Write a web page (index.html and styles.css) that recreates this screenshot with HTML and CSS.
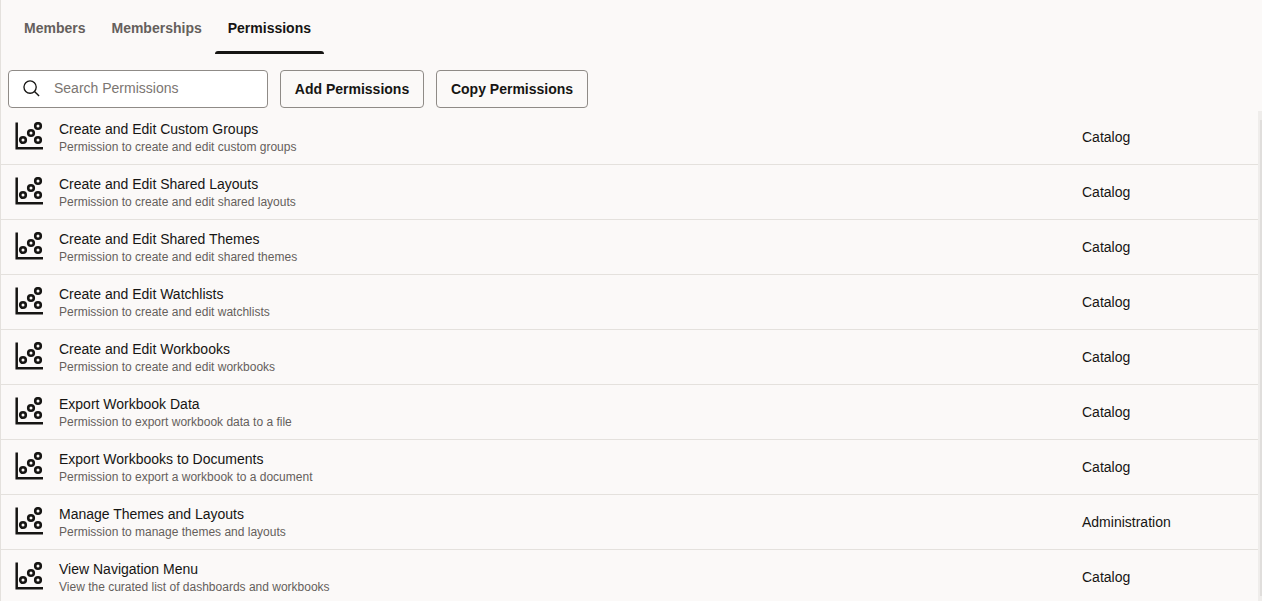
FILE: index.html
```html
<!DOCTYPE html>
<html lang="en">
<head>
<meta charset="utf-8">
<title>Permissions</title>
<link rel="stylesheet" href="styles.css">
</head>
<body>
<svg class="defs" width="0" height="0" aria-hidden="true">
  <symbol id="chart" viewBox="0 0 28 28">
    <path d="M1.7 0.5V26.3H28" fill="none" stroke="currentColor" stroke-width="2.5"/>
    <circle cx="8" cy="18" r="2.8" fill="none" stroke="currentColor" stroke-width="2.6"/>
    <circle cx="16" cy="11" r="2.8" fill="none" stroke="currentColor" stroke-width="2.6"/>
    <circle cx="23" cy="4" r="2.8" fill="none" stroke="currentColor" stroke-width="2.6"/>
    <circle cx="23" cy="18" r="2.8" fill="none" stroke="currentColor" stroke-width="2.6"/>
  </symbol>
</svg>
<div class="page">
  <nav class="tabs">
    <a class="tab">Members</a>
    <a class="tab">Memberships</a>
    <a class="tab active">Permissions</a>
  </nav>
  <div class="toolbar">
    <label class="search">
      <svg class="search-icon" viewBox="0 0 18 18" aria-hidden="true"><circle cx="7.5" cy="7.5" r="6.5" fill="none" stroke="currentColor" stroke-width="1.4"/><path d="M12.2 12.2L17 17" fill="none" stroke="currentColor" stroke-width="1.5"/></svg>
      <span class="placeholder">Search Permissions</span>
    </label>
    <button class="btn btn-add">Add Permissions</button>
    <button class="btn btn-copy">Copy Permissions</button>
  </div>
  <div class="list-wrap">
    <ul class="list">
      <li class="row"><svg class="row-icon"><use href="#chart"/></svg><div class="row-text"><div class="row-title">Create and Edit Custom Groups</div><div class="row-sub">Permission to create and edit custom groups</div></div><div class="row-cat">Catalog</div></li>
      <li class="row"><svg class="row-icon"><use href="#chart"/></svg><div class="row-text"><div class="row-title">Create and Edit Shared Layouts</div><div class="row-sub">Permission to create and edit shared layouts</div></div><div class="row-cat">Catalog</div></li>
      <li class="row"><svg class="row-icon"><use href="#chart"/></svg><div class="row-text"><div class="row-title">Create and Edit Shared Themes</div><div class="row-sub">Permission to create and edit shared themes</div></div><div class="row-cat">Catalog</div></li>
      <li class="row"><svg class="row-icon"><use href="#chart"/></svg><div class="row-text"><div class="row-title">Create and Edit Watchlists</div><div class="row-sub">Permission to create and edit watchlists</div></div><div class="row-cat">Catalog</div></li>
      <li class="row"><svg class="row-icon"><use href="#chart"/></svg><div class="row-text"><div class="row-title">Create and Edit Workbooks</div><div class="row-sub">Permission to create and edit workbooks</div></div><div class="row-cat">Catalog</div></li>
      <li class="row"><svg class="row-icon"><use href="#chart"/></svg><div class="row-text"><div class="row-title">Export Workbook Data</div><div class="row-sub">Permission to export workbook data to a file</div></div><div class="row-cat">Catalog</div></li>
      <li class="row"><svg class="row-icon"><use href="#chart"/></svg><div class="row-text"><div class="row-title">Export Workbooks to Documents</div><div class="row-sub">Permission to export a workbook to a document</div></div><div class="row-cat">Catalog</div></li>
      <li class="row"><svg class="row-icon"><use href="#chart"/></svg><div class="row-text"><div class="row-title">Manage Themes and Layouts</div><div class="row-sub">Permission to manage themes and layouts</div></div><div class="row-cat">Administration</div></li>
      <li class="row"><svg class="row-icon"><use href="#chart"/></svg><div class="row-text"><div class="row-title">View Navigation Menu</div><div class="row-sub">View the curated list of dashboards and workbooks</div></div><div class="row-cat">Catalog</div></li>
    </ul>
    <div class="scrollbar"><div class="scroll-thumb"></div></div>
  </div>
</div>
</body>
</html>
```
FILE: styles.css
```css
* { box-sizing: border-box; }
html, body { margin: 0; height: 100%; overflow: hidden; }
body { background: #fbf9f8; color: #161513; font-family: "Liberation Sans", Arial, sans-serif; }
.defs { position: absolute; }
.page { height: 601px; border-left: 1px solid #e4e1dd; display: flex; flex-direction: column; overflow: hidden; }
.tabs { display: flex; height: 54px; padding-left: 10px; flex: none; }
.tab { display: block; padding: 20px 13px 0; height: 54px; font-size: 14px; line-height: 16px; font-weight: 700; color: #655f5c; }
.tab.active { color: #161513; }
.tab.active::after { content: ""; display: block; height: 3px; margin: 15px -13px 0; background: #161513; border-radius: 3px 3px 0 0; }
.toolbar { display: flex; margin-top: 16px; padding-left: 7px; height: 38px; flex: none; }
.search { width: 260px; height: 38px; display: flex; align-items: center; background: #fff; border: 1px solid #8f8b87; border-radius: 4px; padding: 0 0 2px 14px; }
.search-icon { width: 17px; height: 17px; color: #161513; flex: none; margin-right: 14px; }
.placeholder { font-size: 14px; color: #7b7672; }
.btn { height: 38px; margin-left: 12px; background: transparent; border: 1px solid #8f8b87; border-radius: 4px; font: 700 14px "Liberation Sans", Arial, sans-serif; color: #161513; padding: 0; }
.btn-add { width: 144px; }
.btn-copy { width: 152px; }
.list-wrap { flex: 1; display: flex; margin-top: 2px; min-height: 0; }
.list { list-style: none; margin: 0; padding: 0; flex: 1; min-width: 0; }
.row { height: 55px; display: flex; border-bottom: 1px solid #e4e1dd; }
.row-icon { width: 28px; height: 28px; margin: 12px 0 0 14px; flex: none; color: #161513; }
.row-text { width: 1039px; padding: 11px 0 0 16px; flex: none; }
.row-title { font-size: 14px; line-height: 16px; color: #161513; }
.row-sub { font-size: 12px; line-height: 14px; margin-top: 3px; color: #655f5c; }
.row-cat { font-size: 14px; line-height: 16px; padding-top: 19px; color: #161513; }
.scrollbar { width: 4px; flex: none; background: #efedeb; margin-top: 1px; padding: 9px 0 5px 2px; }
.scroll-thumb { height: 100%; background: #e0dedc; }
```
